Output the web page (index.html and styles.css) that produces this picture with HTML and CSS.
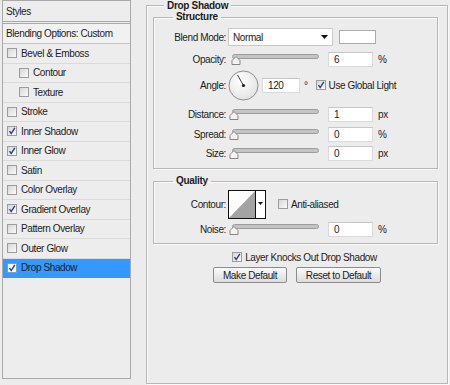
FILE: index.html
```html
<!DOCTYPE html>
<html lang="en">
<head>
    <meta charset="UTF-8">
    <meta name="viewport" content="width=device-width, initial-scale=1.0">
    <title>Layer Style - Drop Shadow</title>
    <link rel="stylesheet" href="styles.css">
</head>
<body>

<div class="dialog">
    <ul class="styles-list">
        <li class="head">Styles</li>
        <li class="blend">Blending Options: Custom</li>
        <li><span class="cb"></span>Bevel &amp; Emboss</li>
        <li class="sub"><span class="cb"></span>Contour</li>
        <li class="sub"><span class="cb"></span>Texture</li>
        <li><span class="cb"></span>Stroke</li>
        <li><span class="cb"><svg width="8" height="8" viewBox="0 0 8 8"><path d="M1.5 4.2 L3.2 6.6 L6.8 0.8" fill="none" stroke="#2a3c8c" stroke-width="1.4"/></svg></span>Inner Shadow</li>
        <li><span class="cb"><svg width="8" height="8" viewBox="0 0 8 8"><path d="M1.5 4.2 L3.2 6.6 L6.8 0.8" fill="none" stroke="#2a3c8c" stroke-width="1.4"/></svg></span>Inner Glow</li>
        <li><span class="cb"></span>Satin</li>
        <li><span class="cb"></span>Color Overlay</li>
        <li><span class="cb"><svg width="8" height="8" viewBox="0 0 8 8"><path d="M1.5 4.2 L3.2 6.6 L6.8 0.8" fill="none" stroke="#2a3c8c" stroke-width="1.4"/></svg></span>Gradient Overlay</li>
        <li><span class="cb"></span>Pattern Overlay</li>
        <li><span class="cb"></span>Outer Glow</li>
        <li class="active"><span class="cb"><svg width="8" height="8" viewBox="0 0 8 8"><path d="M1.5 4.2 L3.2 6.6 L6.8 0.8" fill="none" stroke="#2a3c8c" stroke-width="1.4"/></svg></span>Drop Shadow</li>
    </ul>

    <section class="outer">
        <h2 class="outer-title">Drop Shadow</h2>

        <div class="outer-body">
            <fieldset class="group structure">
                <legend class="legend-inner">Structure</legend>

                <div class="row row-blend">
                    <span class="label">Blend Mode:</span>
                    <div class="select">Normal
                        <svg width="7" height="4" viewBox="0 0 7 4"><path d="M0 0 H7 L3.5 4 Z" fill="#111"/></svg>
                    </div>
                    <span class="swatch"></span>
                </div>

                <div class="row row-opacity">
                    <span class="label">Opacity:</span>
                    <svg class="slider" width="94" height="11" viewBox="0 0 94 11">
                        <rect x="4.5" y="0.5" width="86" height="4" rx="2" fill="#c4c4c4" stroke="#9c9c9c"/>
                        <path d="M8 2.5 L12 6.5 V10.5 H4 V6.5 Z" fill="#f3f3f3" stroke="#858585"/>
                    </svg>
                    <span class="field">6</span>
                    <span class="unit">%</span>
                </div>

                <div class="row row-angle">
                    <span class="label">Angle:</span>
                    <svg class="dial" width="31" height="31" viewBox="0 0 31 31">
                        <defs>
                            <radialGradient id="dialFill" cx="0.4" cy="0.35" r="0.7">
                                <stop offset="0" stop-color="#ffffff"/>
                                <stop offset="1" stop-color="#e2e2e2"/>
                            </radialGradient>
                        </defs>
                        <circle cx="15.5" cy="15.5" r="14.5" fill="url(#dialFill)" stroke="#8e8e8e"/>
                        <line x1="15.5" y1="15.5" x2="9.5" y2="5" stroke="#3a3a3a" stroke-width="1"/>
                        <circle cx="15.5" cy="15.5" r="1.6" fill="#222"/>
                    </svg>
                    <span class="field field-angle">120</span>
                    <span class="degree">°</span>
                    <span class="cb cb-global"><svg width="8" height="8" viewBox="0 0 8 8"><path d="M1.5 4.2 L3.2 6.6 L6.8 0.8" fill="none" stroke="#2a3c8c" stroke-width="1.4"/></svg></span>
                    <span class="check-text">Use Global Light</span>
                </div>

                <div class="row row-distance">
                    <span class="label">Distance:</span>
                    <svg class="slider" width="94" height="11" viewBox="0 0 94 11">
                        <rect x="4.5" y="0.5" width="86" height="4" rx="2" fill="#c4c4c4" stroke="#9c9c9c"/>
                        <path d="M6 2.5 L10 6.5 V10.5 H2 V6.5 Z" fill="#f3f3f3" stroke="#858585"/>
                    </svg>
                    <span class="field">1</span>
                    <span class="unit">px</span>
                </div>

                <div class="row row-spread">
                    <span class="label">Spread:</span>
                    <svg class="slider" width="94" height="11" viewBox="0 0 94 11">
                        <rect x="4.5" y="0.5" width="86" height="4" rx="2" fill="#c4c4c4" stroke="#9c9c9c"/>
                        <path d="M6 2.5 L10 6.5 V10.5 H2 V6.5 Z" fill="#f3f3f3" stroke="#858585"/>
                    </svg>
                    <span class="field">0</span>
                    <span class="unit">%</span>
                </div>

                <div class="row row-size">
                    <span class="label">Size:</span>
                    <svg class="slider" width="94" height="11" viewBox="0 0 94 11">
                        <rect x="4.5" y="0.5" width="86" height="4" rx="2" fill="#c4c4c4" stroke="#9c9c9c"/>
                        <path d="M6 2.5 L10 6.5 V10.5 H2 V6.5 Z" fill="#f3f3f3" stroke="#858585"/>
                    </svg>
                    <span class="field">0</span>
                    <span class="unit">px</span>
                </div>
            </fieldset>

            <fieldset class="group quality">
                <legend class="legend-inner">Quality</legend>

                <div class="row row-contour">
                    <span class="label">Contour:</span>
                    <svg class="contour" width="38" height="29" viewBox="0 0 38 29">
                        <rect x="0.5" y="0.5" width="37" height="28" fill="#fff" stroke="#111"/>
                        <path d="M1 28 L27 1 V28 Z" fill="#a3a3a3"/>
                        <line x1="27.5" y1="0.5" x2="27.5" y2="28.5" stroke="#111"/>
                        <path d="M30 12 H35 L32.5 15 Z" fill="#111"/>
                    </svg>
                    <span class="cb cb-anti"></span>
                    <span class="check-text">Anti-aliased</span>
                </div>

                <div class="row row-noise">
                    <span class="label">Noise:</span>
                    <svg class="slider" width="94" height="11" viewBox="0 0 94 11">
                        <rect x="4.5" y="0.5" width="86" height="4" rx="2" fill="#c4c4c4" stroke="#9c9c9c"/>
                        <path d="M6 2.5 L10 6.5 V10.5 H2 V6.5 Z" fill="#f3f3f3" stroke="#858585"/>
                    </svg>
                    <span class="field">0</span>
                    <span class="unit">%</span>
                </div>
            </fieldset>

            <div class="knock">
                <span class="cb"><svg width="8" height="8" viewBox="0 0 8 8"><path d="M1.5 4.2 L3.2 6.6 L6.8 0.8" fill="none" stroke="#2a3c8c" stroke-width="1.4"/></svg></span>
                <span class="check-text">Layer Knocks Out Drop Shadow</span>
            </div>

            <div class="buttons">
                <button class="btn btn-make">Make Default</button>
                <button class="btn btn-reset">Reset to Default</button>
            </div>
        </div>
    </section>
</div>

</body>
</html>
```

FILE: styles.css
```css
* {
    box-sizing: border-box;
}
body {
    margin: 0;
    background: #ececec;
    font-family: 'Liberation Sans', Arial, sans-serif;
    font-size: 10px;
    letter-spacing: -0.4px;
    color: #1c1c1c;
}
.dialog {
    display: flex;
    align-items: flex-start;
    height: 385px;
    padding-left: 2px;
}

/* left list of effects */
.styles-list {
    list-style: none;
    margin: 0;
    padding: 0;
    width: 129px;
    height: 379px;
    flex: none;
    border: 1px solid #a9a9a9;
    background: #ededed;
}
.styles-list li {
    display: flex;
    align-items: center;
    gap: 4px;
    height: 19.5px;
    padding-left: 4px;
    border-bottom: 1px solid #dadada;
}
.styles-list .head {
    height: 23px;
    padding-left: 3px;
    border-bottom: 3px double #a9a9a9;
}
.styles-list .blend {
    height: 20px;
    padding-left: 3px;
    background: #f1f1f1;
    border-bottom-color: #c4c4c4;
}
.styles-list .sub {
    padding-left: 16px;
}
.styles-list .active {
    background: #3399ff;
    border-bottom-color: #3399ff;
}

.cb {
    display: inline-flex;
    align-items: center;
    justify-content: center;
    flex: none;
    width: 10px;
    height: 10px;
    border: 1px solid #9c9c9c;
    background: linear-gradient(135deg, #d6d6d6, #fbfbfb);
}
.active .cb {
    background: #fff;
    border-color: #7a9cc8;
}

/* group boxes */
.outer {
    flex: none;
    width: 302px;
    height: 379px;
    margin: 5px 0 0 15px;
    border: 1px solid #b7b7b7;
    box-shadow: inset 1px 1px 0 #fafafa, 1px 1px 0 #fafafa;
}
.outer-title {
    width: fit-content;
    margin: -6px 0 0 17px;
    padding: 0 3px;
    font-size: 10px;
    font-weight: bold;
    letter-spacing: -0.3px;
    line-height: 11px;
    background: #ececec;
}
.outer-body {
    padding: 0 9px 0 6px;
}
.group {
    margin: 0;
    padding: 0;
    border: 1px solid #b7b7b7;
    box-shadow: inset 1px 1px 0 #fafafa, 1px 1px 0 #fafafa;
}
.legend-inner {
    margin-left: 19px;
    padding: 0 3px;
    font-weight: bold;
    letter-spacing: -0.3px;
    line-height: 12px;
}
.structure {
    padding-bottom: 5px;
}
.quality {
    margin-top: 6px;
    padding-bottom: 5px;
}

/* control rows */
.row {
    display: flex;
    align-items: center;
}
.row-blend { height: 28px; }
.row-opacity { height: 16px; }
.row-angle { height: 36px; }
.row-distance { height: 22px; }
.row-spread,
.row-size { height: 19px; }
.row-contour { height: 34px; }
.row-noise { height: 17px; }

.label {
    width: 72px;
    margin-right: 2px;
    text-align: right;
    flex: none;
}
.select {
    display: flex;
    align-items: center;
    justify-content: space-between;
    width: 105px;
    height: 18px;
    padding: 0 4px 0 4px;
    background: #fff;
    border: 1px solid #cacaca;
}
.swatch {
    width: 37px;
    height: 14px;
    margin-left: 6px;
    background: #fff;
    border: 1px solid #acacac;
}
.slider {
    flex: none;
}
.field {
    display: flex;
    align-items: center;
    width: 45px;
    height: 15px;
    margin-left: 6px;
    padding-left: 5px;
    background: #fff;
    border: 1px solid #dadada;
    border-top-color: #c6c6c6;
}
.unit {
    margin-left: 5px;
}
.dial {
    flex: none;
}
.field-angle {
    width: 38px;
    margin-left: 3px;
}
.degree {
    margin-left: 4px;
}
.cb-global {
    margin-left: 8px;
}
.check-text {
    margin-left: 3px;
}
.contour {
    flex: none;
}
.cb-anti {
    margin-left: 12px;
}

/* bottom options */
.knock {
    display: flex;
    align-items: center;
    justify-content: center;
    height: 18px;
    margin-top: 4px;
    padding-left: 18px;
}
.buttons {
    display: flex;
    justify-content: center;
    gap: 9px;
    margin-top: 1px;
    padding-left: 3px;
}
.btn {
    height: 16px;
    padding: 0;
    font-family: inherit;
    font-size: 10px;
    letter-spacing: -0.4px;
    color: #1c1c1c;
    background: linear-gradient(#fbfbfb, #dcdcdc);
    border: 1px solid #8c8c8c;
    border-radius: 2px;
}
.btn-make {
    width: 74px;
}
.btn-reset {
    width: 85px;
}
```
